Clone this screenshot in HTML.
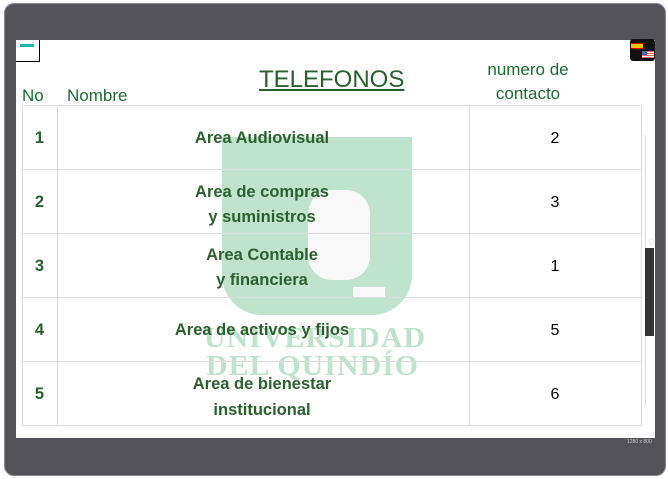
<!DOCTYPE html>
<html><head><meta charset="utf-8"><style>
*{margin:0;padding:0;box-sizing:border-box}
body{width:668px;height:479px;background:#fff;position:relative;overflow:hidden;font-family:"Liberation Sans",sans-serif}
.frame{position:absolute;left:4px;top:3px;width:662px;height:473px;background:#545359;border:1px solid #8a898e;border-radius:10px}
.panel{position:absolute;left:16px;top:40px;width:639px;height:398px;background:#fff}
.t{position:absolute;white-space:nowrap}
.h{color:#1e6a36;font-size:17px}
.b{color:#2b5f30;font-weight:bold;font-size:16.5px;text-align:center}
.n{color:#000;font-size:16px}
.hl{position:absolute;height:1px;background:#dcdcdc}
.vl{position:absolute;width:1px;background:#dcdcdc}
.wm{position:absolute;color:#bfe2cb;font-family:"Liberation Serif",serif;font-weight:bold;font-size:29px;letter-spacing:1px;transform:scaleX(1.03);transform-origin:left}
</style></head><body>
<div class="frame"></div>
<div class="panel"></div>
<div style="position:absolute;left:16px;top:40px;width:24px;height:22px;border-right:1px solid #000;border-bottom:1px solid #000"></div>
<div style="position:absolute;left:20px;top:44px;width:14px;height:3px;background:#1fb5b0"></div>
<div style="position:absolute;left:630px;top:39px;width:25px;height:22px;background:#111;border-radius:3px"></div>
<div style="position:absolute;left:631px;top:43px;width:12px;height:6px;border-top:1px solid #c00;border-bottom:1px solid #c00;background:#f2c200"></div>
<div style="position:absolute;left:642px;top:51px;width:12px;height:7px;background:repeating-linear-gradient(#e66 0 1px,#fff 1px 2px)"></div>
<div style="position:absolute;left:642px;top:51px;width:5px;height:4px;background:#5562b0"></div>
<div style="position:absolute;left:222px;top:137px;width:190px;height:178px;background:#c0e3cd;border-radius:0 0 40px 40px"></div>
<div style="position:absolute;left:308px;top:190px;width:62px;height:90px;background:#f8f8f8;border-radius:24px"></div>
<div style="position:absolute;left:353px;top:287px;width:32px;height:10px;background:#f8f8f8"></div>
<div class="wm" style="left:204px;top:322px">UNIVERSIDAD</div>
<div class="wm" style="left:206px;top:350px">DEL QUINDÍO</div>
<div class="t h" style="left:22px;top:86px">No</div>
<div class="t h" style="left:67px;top:86px">Nombre</div>
<div class="t" style="left:259px;top:66px;font-size:24px;color:#2a5e2e;text-decoration:underline">TELEFONOS</div>
<div class="t h" style="left:468px;top:58px;width:120px;text-align:center;line-height:24px">numero de<br>contacto</div>
<div class="hl" style="left:22px;top:105px;width:620px"></div>
<div class="hl" style="left:22px;top:169px;width:620px"></div>
<div class="hl" style="left:22px;top:233px;width:620px"></div>
<div class="hl" style="left:22px;top:297px;width:620px"></div>
<div class="hl" style="left:22px;top:361px;width:620px"></div>
<div class="hl" style="left:22px;top:425px;width:620px"></div>
<div class="vl" style="left:22px;top:105px;height:321px"></div>
<div class="vl" style="left:57px;top:105px;height:321px"></div>
<div class="vl" style="left:469px;top:105px;height:321px"></div>
<div class="vl" style="left:641px;top:105px;height:321px"></div>
<div class="t b" style="left:22px;width:35px;top:129px">1</div>
<div class="t b" style="left:22px;width:35px;top:193px">2</div>
<div class="t b" style="left:22px;width:35px;top:257px">3</div>
<div class="t b" style="left:22px;width:35px;top:321px">4</div>
<div class="t b" style="left:22px;width:35px;top:385px">5</div>
<div class="t b" style="left:112px;width:300px;top:129px">Area Audiovisual</div>
<div class="t b" style="left:112px;width:300px;top:180px;line-height:25px">Area de compras<br>y suministros</div>
<div class="t b" style="left:112px;width:300px;top:243px;line-height:25px">Area Contable<br>y financiera</div>
<div class="t b" style="left:112px;width:300px;top:321px">Area de activos y fijos</div>
<div class="t b" style="left:112px;width:300px;top:371px;line-height:26px">Area de bienestar<br>institucional</div>
<div class="t n" style="left:469px;width:172px;text-align:center;top:130px">2</div>
<div class="t n" style="left:469px;width:172px;text-align:center;top:194px">3</div>
<div class="t n" style="left:469px;width:172px;text-align:center;top:258px">1</div>
<div class="t n" style="left:469px;width:172px;text-align:center;top:322px">5</div>
<div class="t n" style="left:469px;width:172px;text-align:center;top:386px">6</div>
<div style="position:absolute;left:645px;top:135px;width:1px;height:270px;background:#ddd"></div>
<div style="position:absolute;left:645px;top:248px;width:9px;height:88px;background:#333"></div>
<div class="t" style="left:646px;top:233px;color:#ddd;font-size:12px">☼</div>
<div class="t" style="left:627px;top:439px;color:#ccc;font-size:5px">1280 x 800</div>
</body></html>
